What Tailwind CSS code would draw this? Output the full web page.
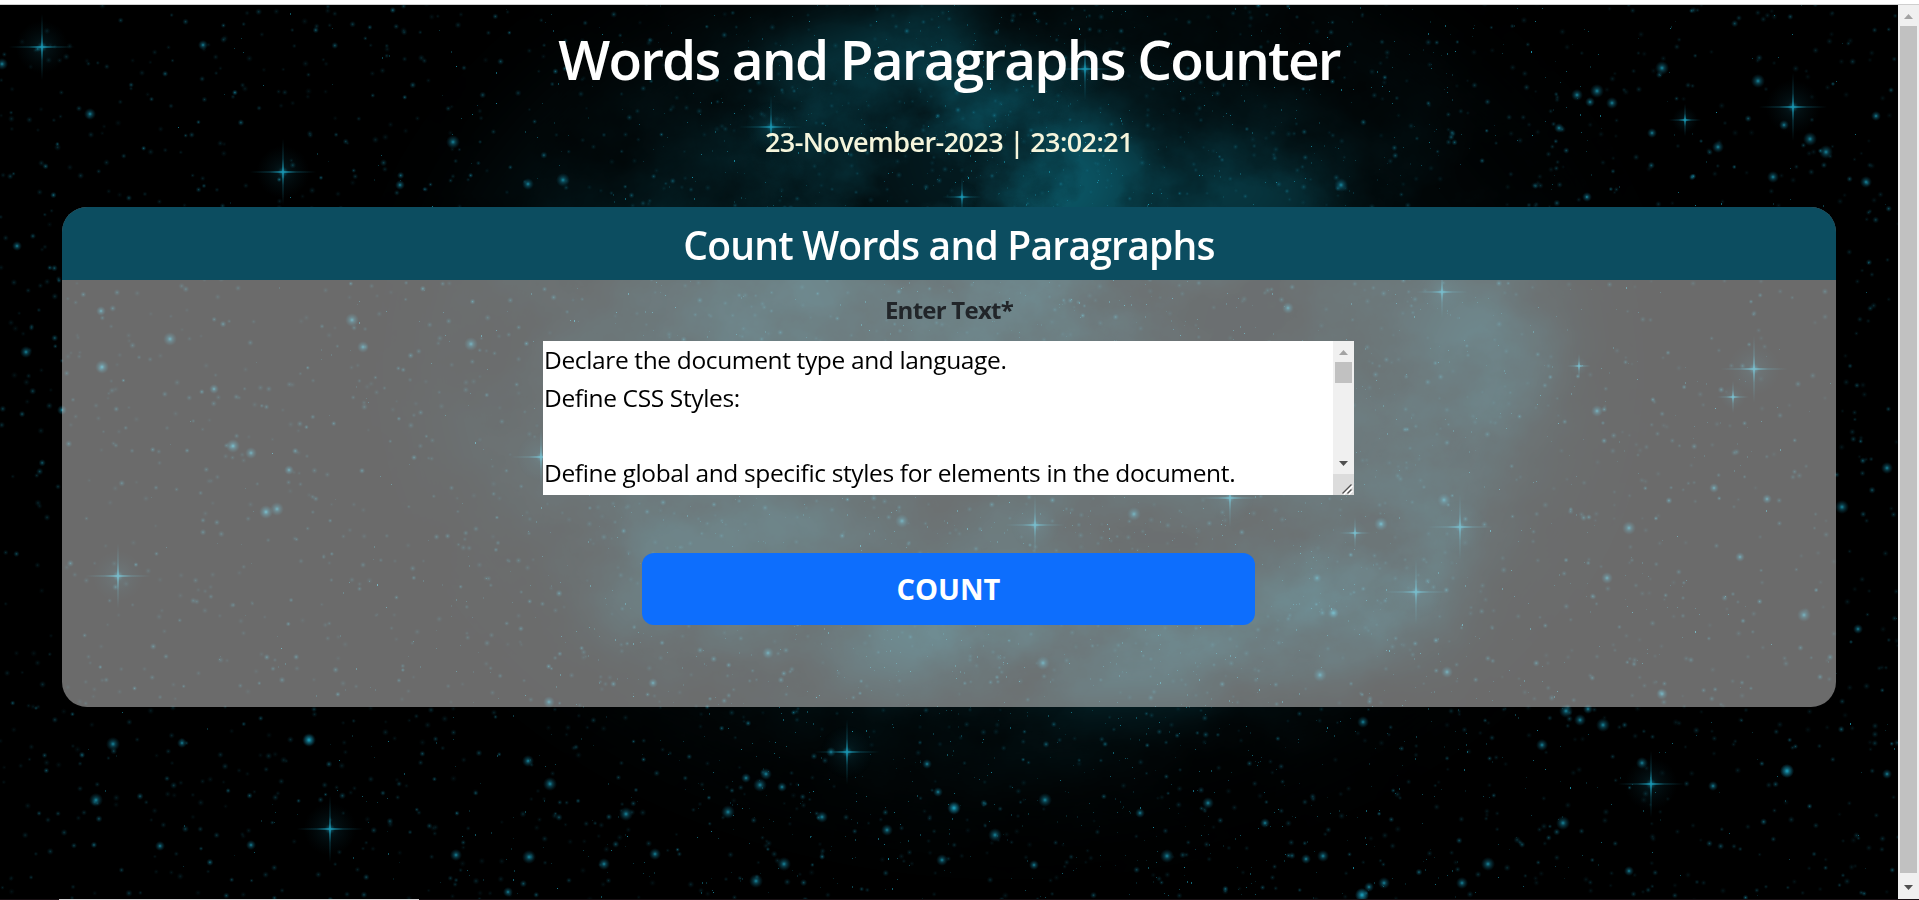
<!DOCTYPE html>
<html lang="en">
<head>
<meta charset="utf-8">
<title>Words and Paragraphs Counter</title>
<script src="https://cdn.jsdelivr.net/npm/@tailwindcss/browser@4"></script>
</head>
<body class="w-[1919px] h-[900px] overflow-hidden bg-black font-['Open_Sans',sans-serif]">
<div class="flex h-[900px] flex-col">
  <div class="h-[5px] shrink-0 border-b border-[#cfcfcf] bg-white"></div>
  <div class="flex min-h-0 flex-1">
    <main class="relative flex w-[1898px] shrink-0 flex-col items-center overflow-hidden bg-black">
      <svg class="absolute left-0 top-[-5px]" width="1898" height="900" viewBox="0 0 1898 900">
        <defs>
          <filter id="soft" x="-50%" y="-50%" width="200%" height="200%" color-interpolation-filters="sRGB"><feGaussianBlur stdDeviation="30"/></filter>
          <filter id="wide" x="-50%" y="-50%" width="200%" height="200%" color-interpolation-filters="sRGB"><feGaussianBlur stdDeviation="75"/></filter>
          <filter id="cloud" x="0" y="0" width="100%" height="100%" color-interpolation-filters="sRGB">
            <feTurbulence type="fractalNoise" baseFrequency="0.007 0.008" numOctaves="7" seed="11"/>
            <feColorMatrix values="0 0 0 0 0.05  0 0 0 0 0.40  0 0 0 0 0.47  2.2 0 0 0 -0.55"/>
          </filter>
          <mask id="m" maskUnits="userSpaceOnUse" x="0" y="0" width="1898" height="900" style="mask-type:alpha">
            <g filter="url(#wide)" fill="#fff">
              <ellipse cx="1010" cy="370" rx="530" ry="370" opacity=".3"/>
            </g>
            <g filter="url(#soft)" fill="#fff">
              <ellipse cx="1010" cy="180" rx="120" ry="90" opacity=".65"/>
              <ellipse cx="870" cy="120" rx="130" ry="100" opacity=".35"/>
              <ellipse cx="930" cy="80" rx="50" ry="90" opacity=".3"/>
              <ellipse cx="1150" cy="190" rx="170" ry="60" opacity=".35"/>
              <ellipse cx="780" cy="330" rx="80" ry="110" opacity=".35"/>
              <ellipse cx="1020" cy="310" rx="150" ry="50" opacity=".45"/>
              <ellipse cx="1490" cy="350" rx="60" ry="80" opacity=".4"/>
              <ellipse cx="1440" cy="470" rx="60" ry="90" opacity=".35"/>
              <ellipse cx="1370" cy="580" rx="80" ry="80" opacity=".6"/>
              <ellipse cx="1100" cy="635" rx="270" ry="42" opacity=".6"/>
              <ellipse cx="720" cy="560" rx="130" ry="110" opacity=".25"/>
            </g>
          </mask>
        </defs>
        <g mask="url(#m)">
          <rect width="1898" height="900" fill="#0b4c5a" opacity=".4"/>
          <rect width="1898" height="900" filter="url(#cloud)"/>
        </g>
      </svg>
      <canvas id="sky" class="absolute left-0 top-[-5px]" width="1898" height="900"></canvas>

      <h1 class="relative mt-[16px] text-[55px] leading-[75px] font-semibold tracking-[-1.85px] text-white whitespace-nowrap">Words and Paragraphs Counter</h1>
      <p class="relative mt-[25px] text-[27px] leading-[42px] font-semibold tracking-[-0.58px] text-[#f5f5dc] whitespace-nowrap">23-November-2023 | 23:02:21</p>

      <section class="relative mt-[44px] flex h-[500px] w-[1774px] flex-col items-center overflow-hidden rounded-[25px] bg-[#eeeeee]/45">
        <h2 class="h-[73px] w-full bg-[#0c4d60] text-center text-[39px] leading-[76px] font-semibold tracking-[-0.77px] text-white">Count Words and Paragraphs</h2>
        <label class="mt-[12px] text-[24px] leading-[36px] font-bold tracking-[-0.75px] text-[#212529]">Enter Text*</label>
        <div class="mt-[13px] mr-px flex h-[154px] w-[811px] bg-white text-[24.5px] leading-[37.5px] tracking-[-0.36px] text-black">
          <div class="flex-1 whitespace-pre pl-px">Declare the document type and language.
Define CSS Styles:

Define global and specific styles for elements in the document.</div>
          <div class="flex w-[21px] flex-col items-center bg-[#f0f0f0]">
            <svg width="21" height="21"><path d="M6 14 L10.5 9 L15 14Z" fill="#a3a3a3"/></svg>
            <div class="h-[21px] w-[17px] bg-[#c1c1c1]"></div>
            <svg class="mt-auto" width="21" height="21"><path d="M6 8 L15 8 L10.5 13Z" fill="#505050"/></svg>
            <svg class="bg-[#dcdcdc]" width="21" height="21"><path d="M10.5 20.5 L19.5 11.5 M15.5 20.5 L19.500 16.500" stroke="#fff" stroke-width="2"/><path d="M9.500 19.500 L18.500 10.500 M14.500 19.500 L18.500 15.500" stroke="#505050" stroke-width="1.400"/></svg>
          </div>
        </div>
        <button class="mt-[58px] mr-px h-[72px] w-[613px] rounded-[12px] bg-[#0d6efd] text-[29px] leading-[72px] font-bold text-white">COUNT</button>
      </section>
    </main>
    <div class="flex flex-1 flex-col items-center bg-[#f0f0f0]">
      <svg width="21" height="21"><path d="M6 14 L10.5 9 L15 14Z" fill="#a3a3a3"/></svg>
      <div class="w-[17px] flex-1 bg-[#c1c1c1]"></div>
      <svg width="21" height="26"><path d="M6 12 L15 12 L10.5 17Z" fill="#505050"/></svg>
    </div>
  </div>
  <div class="flex h-px shrink-0 bg-[#1a1216]"><div class="ml-[59px] w-[360px] bg-[#d8d4d6]"></div></div>
</div>
<script>
const g = document.getElementById('sky').getContext('2d');
let s = 77;
const rnd = () => (s = (s * 16807) % 2147483647) / 2147483647;
function dot(x, y, r, a) {
  const q = g.createRadialGradient(x, y, 0, x, y, r);
  q.addColorStop(0, `rgba(28,160,188,${a})`);
  q.addColorStop(.35, `rgba(20,125,150,${a * .55})`);
  q.addColorStop(1, 'rgba(10,80,100,0)');
  g.fillStyle = q; g.fillRect(x - r, y - r, 2 * r, 2 * r);
}
for (let i = 0; i < 3600; i++) dot(rnd() * 1898, rnd() * 900, 2.2 + rnd() * 1.6, .12 + rnd() * rnd() * .65);
for (let i = 0; i < 2600; i++) {
  const x = 1060 + (rnd() + rnd() + rnd() - 1.5) * 720, y = rnd() * 900;
  g.fillStyle = `rgba(30,165,190,${.15 + rnd() * rnd() * .75})`; g.fillRect(x | 0, y | 0, 1, rnd() > .75 ? 2 : 1);
}
const mid = '203,45 90,114 453,142 400,185 528,184 563,180 17,246 2,64 1341,185 1559,128 1577,95 1597,91 1590,102 1612,103 1662,68 1652,133 1718,147 1758,81 1784,125 1773,177 1826,152 1876,116 1866,182 1810,139 1587,197 309,740 96,800 251,845 528,761 529,857 182,743 456,855 550,784 160,846 549,702 113,744 508,892 604,864 626,814 927,764 954,808 728,812 746,778 766,774 760,785 782,787 822,817 1045,800 1140,813 1208,803 1167,856 1034,865 942,860 995,835 938,792 887,830 784,864 1265,823 655,854 756,881 653,683 768,653 1043,663 831,752 1542,745 1787,771 1887,774 1642,763 1566,711 1588,709 1580,720 1603,725 1306,859 1323,856 1362,895 1369,887 1384,883 1488,864 1629,871 1462,883 1563,823 1334,613 1662,694 1804,615 1858,629 1447,672 1320,675 1713,786 1363,722 170,339 101,311 251,453 277,509 289,470 363,347 471,344 214,389 26,352 352,320 62,410 1597,411 1629,528 1740,557 1607,578 1842,507 1767,499 1887,468 1444,500 1714,488 1288,308 902,521 1317,578 1333,613 1134,514';
mid.split(' ').forEach((p, i) => { const [x, y] = p.split(',').map(Number); dot(x, y, 5 + i % 3, .85); });
[[102,367],[233,446],[266,512],[1381,524],[954,808],[1787,771],[1362,895],[309,740]].forEach(([x, y]) => dot(x, y, 7, 1));
[[42,47,33],[283,172,33],[771,127,32],[1085,69,32],[1793,107,34],[1685,120,16],[330,829,33],[847,752,33],[1651,784,33],[118,576,33],[1754,369,34],[1579,366,12],[1460,527,33],[1416,592,33],[1442,292,26],[1733,397,16],[1035,525,30],[1230,498,30],[541,457,30],[1355,533,16],[962,197,20]].forEach(([x, y, l]) => {
  dot(x, y, l * .8, .2);
  dot(x, y, l * .16, .9);
  for (const [w, h] of [[l, 1], [1, l]]) {
    const q = w > h ? g.createLinearGradient(x - l, 0, x + l, 0) : g.createLinearGradient(0, y - l, 0, y + l);
    q.addColorStop(0, 'rgba(20,130,155,0)'); q.addColorStop(.3, 'rgba(20,130,155,.25)'); q.addColorStop(.5, 'rgba(25,150,178,.85)'); q.addColorStop(.7, 'rgba(20,130,155,.25)'); q.addColorStop(1, 'rgba(20,130,155,0)');
    g.fillStyle = q; g.fillRect(x - w, y - h, 2 * w, 2 * h);
  }
});
</script>
</body>
</html>
